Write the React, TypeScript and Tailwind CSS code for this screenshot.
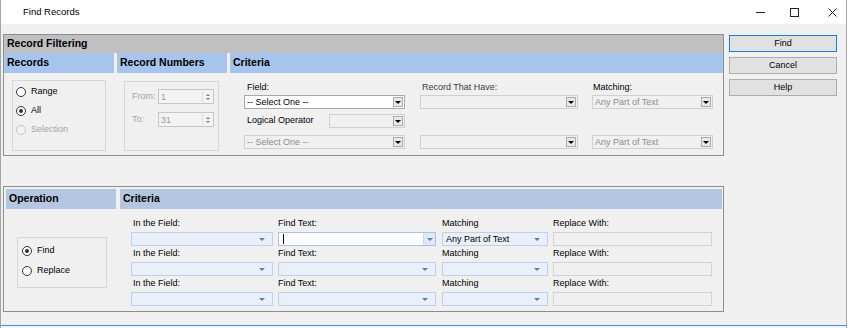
import React from "react";

const ui = "font-['Liberation_Sans',sans-serif] text-[9px]";
const head = "font-['Liberation_Sans',sans-serif] text-[10.5px] font-bold";

function Arrow({ color }: { color: string }) {
  return <span className={`h-0 w-0 border-x-[3px] border-t-[3px] border-x-transparent ${color}`} />;
}

function WinSelect({ width, value, enabled }: { width: string; value?: string; enabled?: boolean }) {
  return (
    <div
      className={`flex h-[14px] items-center border ${width} ${
        enabled ? "border-[#a9a9a9] bg-white text-black" : "border-[#cfcfcf] bg-[#f0f0f0] text-[#8c8c8c]"
      }`}
    >
      <span className="flex-1 truncate pl-[2px] leading-[12px]">{value}</span>
      <span className="mr-[1px] flex h-[10px] w-[10px] items-center justify-center border border-[#acacac] bg-[#e8e8e8]">
        <Arrow color="border-t-black" />
      </span>
    </div>
  );
}

function BlueSelect({ width, value }: { width: string; value?: string }) {
  return (
    <div className={`flex h-[14px] items-center border border-[#bfd1ea] bg-[#e9f0fa] ${width}`}>
      <span className="flex-1 truncate pl-[3px] leading-[12px] text-black">{value}</span>
      <span className="mr-[7px] flex">
        <Arrow color="border-t-[#5d7eae]" />
      </span>
    </div>
  );
}

function Radio({ label, checked, disabled }: { label: string; checked?: boolean; disabled?: boolean }) {
  return (
    <div className="flex h-[19px] items-center">
      <span
        className={`flex h-[10px] w-[10px] items-center justify-center rounded-full border ${
          disabled ? "border-[#c4c4c4] bg-[#f3f3f3]" : "border-[#333333] bg-white"
        }`}
      >
        {checked ? <span className="h-[4px] w-[4px] rounded-full bg-[#333333]" /> : null}
      </span>
      <span className={`ml-[5px] ${disabled ? "text-[#a3a3a3]" : "text-black"}`}>{label}</span>
    </div>
  );
}

function Spinner({ value }: { value: string }) {
  return (
    <div className="flex h-[15px] w-[56px] items-center border border-[#c6c6c6] bg-[#f3f3f3]">
      <span className="flex-1 pl-[2px] leading-[12px] text-[#9a9a9a]">{value}</span>
      <span className="mr-[1px] flex h-[11px] w-[10px] flex-col items-center justify-center gap-[2px] border-l border-[#dedede]">
        <span className="h-0 w-0 border-x-[2.5px] border-b-[2.5px] border-x-transparent border-b-[#7a7a7a]" />
        <span className="h-0 w-0 border-x-[2.5px] border-t-[2.5px] border-x-transparent border-t-[#7a7a7a]" />
      </span>
    </div>
  );
}

function Header({ title, className }: { title: string; className: string }) {
  return (
    <div className={`flex h-[20px] items-center pl-[3px] text-black ${head} ${className}`}>{title}</div>
  );
}

const rows = [0, 1, 2];

export default function App() {
  return (
    <div className={`h-[328px] w-[850px] overflow-hidden bg-white ${ui}`}>
      <div className="flex h-[328px] w-[847px] flex-col border-x border-[#a3a3a3]">
        {/* title bar */}
        <div className="flex h-[24px] shrink-0 items-center bg-white">
          <span className="pl-[22px] text-[9.5px] text-black">Find Records</span>
          <div className="ml-auto flex items-center">
            <span className="h-[1px] w-[9px] bg-[#222222]" />
            <span className="ml-[25px] h-[9px] w-[9px] border border-[#222222]" />
            <svg className="ml-[29px] mr-[9px]" width="9" height="9" viewBox="0 0 9 9">
              <path d="M0.5 0.5 L8.5 8.5 M8.5 0.5 L0.5 8.5" stroke="#222222" strokeWidth="1" />
            </svg>
          </div>
        </div>

        {/* body */}
        <div className="flex h-[301px] shrink-0 bg-[#f0f0f0] pl-[2px] pt-[10px]">
          <div className="flex w-[721px] flex-col">
            {/* Record Filtering */}
            <div className="flex h-[122px] flex-col border border-[#8e8e8e] bg-[#f0f0f0]">
              <div className={`flex h-[18px] items-center bg-[#c0c0c0] pl-[3px] text-black ${head}`}>
                Record Filtering
              </div>
              <div className="flex gap-[3px]">
                <div className="flex w-[110px] flex-col">
                  <Header title="Records" className="bg-[#a6c4ec]" />
                  <div className="ml-[8px] mt-[7px] flex h-[71px] w-[94px] flex-col border border-[#d7d7d7] pl-[3px] pt-[1px]">
                    <Radio label="Range" />
                    <Radio label="All" checked />
                    <Radio label="Selection" disabled />
                  </div>
                </div>
                <div className="flex w-[110px] flex-col">
                  <Header title="Record Numbers" className="bg-[#a6c4ec]" />
                  <div className="ml-[7px] mt-[8px] flex h-[70px] w-[95px] flex-col gap-[8px] border border-[#d7d7d7] pl-[7px] pt-[7px]">
                    <div className="flex items-center">
                      <span className="w-[26px] text-[#a3a3a3]">From:</span>
                      <Spinner value="1" />
                    </div>
                    <div className="flex items-center">
                      <span className="w-[26px] text-[#a3a3a3]">To:</span>
                      <Spinner value="31" />
                    </div>
                  </div>
                </div>
                <div className="flex flex-1 flex-col">
                  <Header title="Criteria" className="bg-[#a6c4ec]" />
                  <div className="ml-[14px] mt-[7px] flex flex-col text-black">
                    <div className="flex h-[14px] items-center leading-[14px]">
                      <span className="w-[161px] pl-[3px]">Field:</span>
                      <span className="ml-[15px] w-[158px] pl-[2px] text-[#3c3c3c]">Record That Have:</span>
                      <span className="ml-[14px] w-[121px] pl-[1px]">Matching:</span>
                    </div>
                    <div className="mt-[1px] flex">
                      <WinSelect width="w-[161px]" value="-- Select One --" enabled />
                      <div className="ml-[15px]">
                        <WinSelect width="w-[158px]" />
                      </div>
                      <div className="ml-[14px]">
                        <WinSelect width="w-[121px]" value="Any Part of Text" />
                      </div>
                    </div>
                    <div className="mt-[5px] flex w-[161px] items-center justify-between">
                      <span className="pl-[3px]">Logical Operator</span>
                      <WinSelect width="w-[76px]" />
                    </div>
                    <div className="mt-[7px] flex">
                      <WinSelect width="w-[161px]" value="-- Select One --" />
                      <div className="ml-[15px]">
                        <WinSelect width="w-[158px]" />
                      </div>
                      <div className="ml-[14px]">
                        <WinSelect width="w-[121px]" value="Any Part of Text" />
                      </div>
                    </div>
                  </div>
                </div>
              </div>
            </div>

            {/* Operation */}
            <div className="mt-[30px] flex h-[126px] border border-[#8e8e8e] bg-[#f0f0f0] pl-[2px] pt-[2px]">
              <div className="flex w-[110px] flex-col">
                <Header title="Operation" className="bg-[#b5c7e0]" />
                <div className="ml-[11px] mt-[28px] flex h-[51px] w-[90px] flex-col border border-[#d7d7d7] pl-[4px] pt-[3px]">
                  <div className="flex h-[20px] items-center">
                    <Radio label="Find" checked />
                  </div>
                  <div className="flex h-[20px] items-center">
                    <Radio label="Replace" />
                  </div>
                </div>
              </div>
              <div className="ml-[4px] flex w-[602px] flex-col">
                <Header title="Criteria" className="bg-[#b5c7e0]" />
                <div className="ml-[11px] mt-[7px] flex flex-col text-black">
                  {rows.map((r) => (
                    <div key={r} className="flex flex-col">
                      <div className="flex h-[16px] leading-[14px]">
                        <span className="w-[142px] pl-[2px]">In the Field:</span>
                        <span className="ml-[5px] w-[158px]">Find Text:</span>
                        <span className="ml-[6px] w-[106px]">Matching</span>
                        <span className="ml-[5px] w-[159px]">Replace With:</span>
                      </div>
                      <div className="flex">
                        <BlueSelect width="w-[142px]" />
                        <div className="ml-[5px]">
                          {r === 0 ? (
                            <div className="flex h-[14px] w-[158px] items-center border border-[#a7c3e6] bg-white">
                              <span className="ml-[4px] h-[10px] w-[1px] bg-black" />
                              <span className="ml-auto flex h-[12px] w-[12px] items-center justify-center border-l border-[#c9d8ec] bg-[#dfe8f5]">
                                <Arrow color="border-t-[#5d7eae]" />
                              </span>
                            </div>
                          ) : (
                            <BlueSelect width="w-[158px]" />
                          )}
                        </div>
                        <div className="ml-[6px]">
                          <BlueSelect width="w-[106px]" value={r === 0 ? "Any Part of Text" : undefined} />
                        </div>
                        <div className="ml-[5px] h-[14px] w-[159px] border border-[#d3d3d3] bg-[#f0f0f0]" />
                      </div>
                    </div>
                  ))}
                </div>
              </div>
            </div>
          </div>

          {/* buttons */}
          <div className="ml-[5px] flex w-[108px] flex-col gap-[5px] pt-[1px]">
            <button type="button" className="h-[17px] w-[108px] border border-[#1a7fd6] bg-[#e1e1e1] text-black">
              Find
            </button>
            <button type="button" className="h-[17px] w-[108px] border border-[#adadad] bg-[#e1e1e1] text-black">
              Cancel
            </button>
            <button type="button" className="h-[17px] w-[108px] border border-[#adadad] bg-[#e1e1e1] text-black">
              Help
            </button>
          </div>
        </div>
        <div className="h-[1px] shrink-0 bg-[#3a8ee6]" />
        <div className="h-[2px] shrink-0 bg-[#f4f4f4]" />
      </div>
    </div>
  );
}
